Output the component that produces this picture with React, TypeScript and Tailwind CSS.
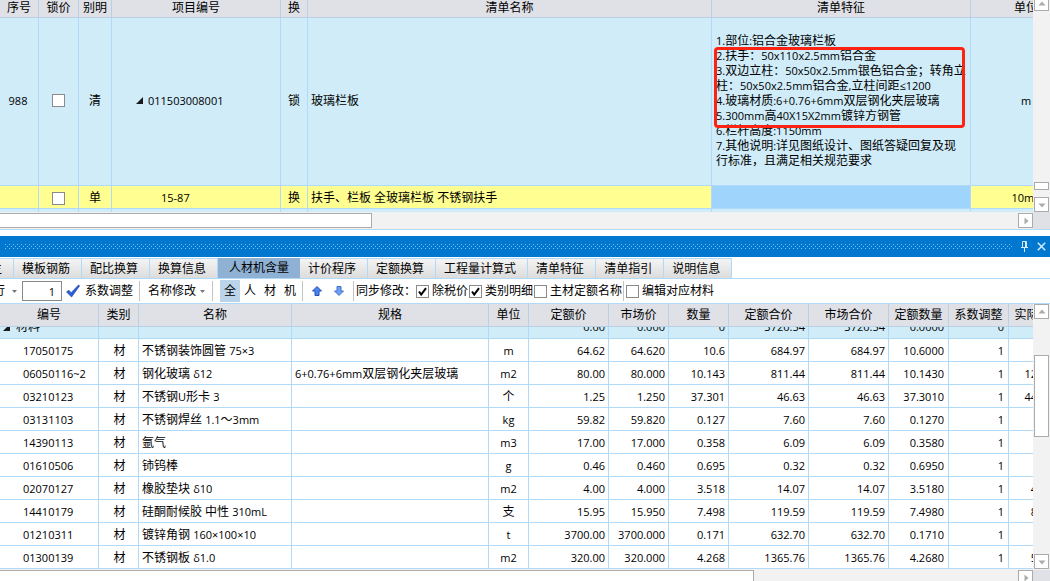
import { Fragment, type ReactNode } from 'react';

const BILL_COLUMNS = [
  { label: '序号', width: 'w-[39px]' },
  { label: '锁价', width: 'w-[40px]' },
  { label: '别明', width: 'w-[33px]' },
  { label: '项目编号', width: 'w-[169px]' },
  { label: '换', width: 'w-[27px]' },
  { label: '清单名称', width: 'w-[404px]' },
  { label: '清单特征', width: 'w-[259px]' },
  { label: '单位', width: 'w-[111px]' },
];

const FEATURES = [
  '1.部位:铝合金玻璃栏板',
  '2.扶手：50x110x2.5mm铝合金',
  '3.双边立柱：50x50x2.5mm银色铝合金；转角立',
  '柱：50x50x2.5mm铝合金,立柱间距≤1200',
  '4.玻璃材质:6+0.76+6mm双层钢化夹层玻璃',
  '5.300mm高40X15X2mm镀锌方钢管',
  '6.栏杆高度:1150mm',
  '7.其他说明:详见图纸设计、图纸答疑回复及现',
  '行标准，且满足相关规范要求',
];

const TABS = [
  '模板钢筋',
  '配比换算',
  '换算信息',
  '人材机含量',
  '计价程序',
  '定额换算',
  '工程量计算式',
  '清单特征',
  '清单指引',
  '说明信息',
];

const MATERIAL_COLUMNS = [
  { label: '编号', width: 'w-[99px]', cell: 'pl-[23px]' },
  { label: '类别', width: 'w-[40px]', cell: 'pl-0.5 text-center' },
  { label: '名称', width: 'w-[153px]', cell: 'pl-[3px]' },
  { label: '规格', width: 'w-[197px]', cell: 'pl-[3px]' },
  { label: '单位', width: 'w-[40px]', cell: 'text-center' },
  { label: '定额价', width: 'w-[80px]', cell: 'pr-[3px] text-right' },
  { label: '市场价', width: 'w-[60px]', cell: 'pr-[3px] text-right' },
  { label: '数量', width: 'w-[60px]', cell: 'pr-[3px] text-right' },
  { label: '定额合价', width: 'w-[80px]', cell: 'pr-[3px] text-right' },
  { label: '市场合价', width: 'w-[80px]', cell: 'pr-[3px] text-right' },
  { label: '定额数量', width: 'w-[60px]', cell: 'pr-1 text-right' },
  { label: '系数调整', width: 'w-[60px]', cell: 'pr-1 text-right' },
  { label: '实际数量', width: 'w-[60px]', cell: 'pr-7 text-right' },
];

const TOTAL_ROW = ['材料', '', '', '', '', '0.00', '0.000', '0', '3720.54', '3720.54', '0.0000', '0', ''];

const MATERIALS = [
  ['17050175', '材', '不锈钢装饰圆管 75×3', '', 'm', '64.62', '64.620', '10.6', '684.97', '684.97', '10.6000', '1', ''],
  ['06050116~2', '材', '钢化玻璃 δ12', '6+0.76+6mm双层钢化夹层玻璃', 'm2', '80.00', '80.000', '10.143', '811.44', '811.44', '10.1430', '1', '12.'],
  ['03210123', '材', '不锈钢U形卡 3', '', '个', '1.25', '1.250', '37.301', '46.63', '46.63', '37.3010', '1', '44.'],
  ['03131103', '材', '不锈钢焊丝 1.1～3mm', '', 'kg', '59.82', '59.820', '0.127', '7.60', '7.60', '0.1270', '1', ''],
  ['14390113', '材', '氩气', '', 'm3', '17.00', '17.000', '0.358', '6.09', '6.09', '0.3580', '1', ''],
  ['01610506', '材', '铈钨棒', '', 'g', '0.46', '0.460', '0.695', '0.32', '0.32', '0.6950', '1', ''],
  ['02070127', '材', '橡胶垫块 δ10', '', 'm2', '4.00', '4.000', '3.518', '14.07', '14.07', '3.5180', '1', '4.'],
  ['14410179', '材', '硅酮耐候胶 中性 310mL', '', '支', '15.95', '15.950', '7.498', '119.59', '119.59', '7.4980', '1', '8.'],
  ['01210311', '材', '镀锌角钢 160×100×10', '', 't', '3700.00', '3700.000', '0.171', '632.70', '632.70', '0.1710', '1', ''],
  ['01300139', '材', '不锈钢板 δ1.0', '', 'm2', '320.00', '320.000', '4.268', '1365.76', '1365.76', '4.2680', '1', '5.'],
];

/* Latin runs are set one size below the Chinese text around them */
function Mixed({ text }: { text: string }) {
  return (
    <>
      {text.split(/([!-~×δ≤]+)/).map((run, i) =>
        i % 2 === 1 ? (
          <span key={i} className="text-[11px]">
            {run}
          </span>
        ) : (
          <Fragment key={i}>{run}</Fragment>
        ),
      )}
    </>
  );
}

function CollapseMark() {
  return (
    <svg width="7" height="7" viewBox="0 0 7 7" className="shrink-0">
      <path d="M7 0v7H0z" fill="#1a1a1a" />
    </svg>
  );
}

const ARROWS = {
  up: 'M4 1.5 7.5 5.5h-7z',
  down: 'M.5 2.5h7L4 6.5z',
  right: 'M2.5 .5 6.5 4l-4 3.5z',
};

function ScrollButton({ dir, label }: { dir: keyof typeof ARROWS; label: string }) {
  return (
    <button
      aria-label={label}
      className="flex size-[15px] shrink-0 items-center justify-center border border-[#ababab] bg-white"
    >
      <svg width="8" height="8" viewBox="0 0 8 8">
        <path d={ARROWS[dir]} fill="#ababab" />
      </svg>
    </button>
  );
}

function Separator() {
  return <span className="h-5 w-px shrink-0 bg-[#c3c3c3]" />;
}

function CheckBox({ label, checked = false }: { label: string; checked?: boolean }) {
  return (
    <label className="flex shrink-0 items-center gap-[3px]">
      <span className="relative size-[13px]">
        <input
          type="checkbox"
          defaultChecked={checked}
          className="peer block size-[13px] appearance-none border border-[#8a8a8a] bg-white"
        />
        <svg
          viewBox="0 0 13 13"
          className="pointer-events-none absolute inset-0 hidden size-[13px] peer-checked:block"
        >
          <path d="M3 6.5 5.2 9.5 10 3.2" fill="none" stroke="#000" strokeWidth="2" />
        </svg>
      </span>
      <span>{label}</span>
    </label>
  );
}

function Th({ children }: { children: ReactNode }) {
  return (
    <th className="overflow-hidden border-r border-b border-[#b9cfe4] p-0 text-center font-normal whitespace-nowrap">
      {children}
    </th>
  );
}

function LockBox({ label }: { label: string }) {
  return (
    <input
      type="checkbox"
      aria-label={label}
      className="mx-auto block size-[13px] appearance-none border border-[#8a8a8a] bg-white"
    />
  );
}

function BillTable() {
  const itemCell = 'border-r border-b border-[#b0daf7] pb-0.5';
  const quotaCell = 'border-r border-b border-[#b0daf7] pt-0.5';
  return (
    <table className="w-[1082px] table-fixed border-separate border-spacing-0">
      <colgroup>
        {BILL_COLUMNS.map((c) => (
          <col key={c.label} className={c.width} />
        ))}
      </colgroup>
      <thead>
        <tr className="h-[18px] bg-[#dfe1e7] leading-[14px]">
          {BILL_COLUMNS.map((c) => (
            <th
              key={c.label}
              className="border-r border-b border-[#b9cfe4] px-0 pt-0 pb-0.5 text-center font-normal whitespace-nowrap"
            >
              {c.label}
            </th>
          ))}
        </tr>
      </thead>
      <tbody>
        <tr className="h-[168px] bg-[#cfecf8]">
          <td className={`${itemCell} pr-0.5 text-center text-[11px]`}>988</td>
          <td className={itemCell}>
            <LockBox label="锁价 988" />
          </td>
          <td className={`${itemCell} text-center`}>清</td>
          <td className={itemCell}>
            <div className="flex items-center gap-[5px] pl-6 text-[11px]">
              <CollapseMark />
              011503008001
            </div>
          </td>
          <td className={`${itemCell} text-center`}>锁</td>
          <td className={`${itemCell} pl-[3px]`}>玻璃栏板</td>
          <td className={`${itemCell} relative pl-1`}>
            <div className="leading-[15px] whitespace-pre">
              {FEATURES.map((line) => (
                <p key={line} className="h-[15px]">
                  <Mixed text={line} />
                </p>
              ))}
            </div>
            <div className="absolute top-[29px] right-[5px] left-[2px] h-[81px] rounded-sm border-3 border-[#fc2313]" />
          </td>
          <td className={`${itemCell} text-center text-[11px]`}>m</td>
        </tr>
        <tr className="h-[23px] bg-[#ffff91]">
          <td className={quotaCell} />
          <td className={quotaCell}>
            <LockBox label="锁价 15-87" />
          </td>
          <td className={`${quotaCell} text-center`}>单</td>
          <td className={`${quotaCell} pl-[49px] text-[11px]`}>15-87</td>
          <td className={`${quotaCell} text-center`}>换</td>
          <td className={`${quotaCell} pl-[3px]`}>扶手、栏板 全玻璃栏板 不锈钢扶手</td>
          <td className={`${quotaCell} bg-[#9fd5fd]`} />
          <td className={`${quotaCell} text-center text-[11px]`}>10m2</td>
        </tr>
        <tr className="h-[3px] bg-[#cfecf8]">
          {BILL_COLUMNS.map((c) => (
            <td key={c.label} className="border-r border-[#b0daf7] p-0" />
          ))}
        </tr>
      </tbody>
    </table>
  );
}

function MaterialTable() {
  return (
    <table className="w-[1069px] table-fixed border-separate border-spacing-0">
      <colgroup>
        {MATERIAL_COLUMNS.map((c) => (
          <col key={c.label} className={c.width} />
        ))}
      </colgroup>
      <thead>
        <tr className="h-[23px] bg-[#dfe1e7]">
          {MATERIAL_COLUMNS.map((c) => (
            <Th key={c.label}>{c.label}</Th>
          ))}
        </tr>
      </thead>
      <tbody>
        {/* group row, scrolled half under the header */}
        <tr className="bg-[#cfecf8]">
          {TOTAL_ROW.map((value, i) => (
            <td key={i} className="border-r border-b border-[#b0daf7] p-0">
              <div className="flex h-[11px] flex-col justify-end overflow-hidden">
                {i === 0 ? (
                  <div className="flex h-[22px] shrink-0 items-center gap-1.5 pl-[3px]">
                    <CollapseMark />
                    {value}
                  </div>
                ) : (
                  <div className={`h-[22px] shrink-0 text-[11px] leading-[22px] ${MATERIAL_COLUMNS[i].cell}`}>
                    {value}
                  </div>
                )}
              </div>
            </td>
          ))}
        </tr>
        {MATERIALS.map((row) => (
          <tr key={row[0]} className="h-[23px] bg-white">
            {row.map((value, i) => (
              <td
                key={i}
                className={`overflow-hidden border-r border-b border-[#b0daf7] pt-0.5 pb-0 whitespace-nowrap ${MATERIAL_COLUMNS[i].cell}`}
              >
                <Mixed text={value} />
              </td>
            ))}
          </tr>
        ))}
      </tbody>
    </table>
  );
}

export default function App() {
  return (
    <div className="flex h-screen flex-col overflow-hidden bg-white font-['Open_Sans','Noto_Sans_CJK_SC',sans-serif] text-xs leading-4 text-black">
      {/* Bill list */}
      <section className="shrink-0 border-b border-[#b0daf7]">
        <div className="flex">
          <div className="h-[212px] min-w-0 flex-1 overflow-hidden">
            <BillTable />
          </div>
          <div className="flex h-[212px] w-[17px] flex-col justify-end bg-[#f2f2f2] pl-px">
            <div className="-mt-1 mb-auto">
              <ScrollButton dir="up" label="向上滚动" />
            </div>
            <div className="mb-[7px] h-2 w-[15px] shrink-0 border border-[#ababab] bg-white" />
            <ScrollButton dir="down" label="向下滚动" />
          </div>
        </div>
        <div className="flex h-[17px] bg-[#f2f2f2]">
          <div className="flex min-w-0 flex-1 items-center justify-between">
            <div className="h-[15px] w-[36%] border border-l-0 border-[#ababab] bg-white" />
            <ScrollButton dir="right" label="向右滚动" />
          </div>
          <div className="w-[17px] bg-[#dfe1e7]" />
        </div>
      </section>

      {/* Docked panel title */}
      <div className="mt-1.5 flex h-[21px] shrink-0 items-center bg-[#0078d0] pl-[5px]">
        <svg className="h-[5px] min-w-0 flex-1" aria-hidden="true">
          <defs>
            <pattern id="grip" width="4" height="4" patternUnits="userSpaceOnUse">
              <path d="M0 0h1v1H0zM2 2h1v1H2z" fill="#7fc0f0" />
            </pattern>
          </defs>
          <rect width="100%" height="5" fill="url(#grip)" />
        </svg>
        <button aria-label="固定" className="ml-[7px]">
          <svg width="9" height="11" viewBox="0 0 9 11" fill="none" stroke="#d5ebfa">
            <path d="M2.5 6V.5h4V6M1 6.5h7M4.5 7v4M5.5 1v5" />
          </svg>
        </button>
        <button aria-label="关闭" className="mr-1 ml-2">
          <svg width="9" height="9" viewBox="0 0 9 9" fill="none" stroke="#d5ebfa" strokeWidth="1.5">
            <path d="M.8.8l7.4 7.4M8.2.8.8 8.2" />
          </svg>
        </button>
      </div>

      {/* Tabs */}
      <nav className="mt-px flex h-[21px] shrink-0 border-b border-[#b0daf7]">
        <button className="flex w-[14px] shrink-0 justify-end overflow-hidden border-t border-r border-[#b0daf7] bg-linear-to-b from-[#f4f4f4] to-[#dcdcdc] pr-[11px] leading-5">
          主
        </button>
        {TABS.map((tab) =>
          tab === '人材机含量' ? (
            <button key={tab} className="shrink-0 bg-[#8fb1d3] px-[11px]">
              {tab}
            </button>
          ) : (
            <button
              key={tab}
              className="shrink-0 border-t border-r border-[#b0daf7] bg-linear-to-b from-[#f4f4f4] to-[#dcdcdc] pr-[11px] pl-2 leading-5"
            >
              {tab}
            </button>
          ),
        )}
      </nav>

      {/* Toolbar */}
      <div className="flex h-6 shrink-0 items-center overflow-hidden whitespace-nowrap">
        <button className="flex w-[22px] shrink-0 items-center justify-end gap-[7px] pr-[5px]">
          <span>行</span>
          <svg width="5" height="3" viewBox="0 0 5 3" className="shrink-0">
            <path d="M0 0h5L2.5 3z" fill="#777" />
          </svg>
        </button>
        <input
          aria-label="系数"
          defaultValue="1"
          className="h-5 w-10 shrink-0 border border-[#8a8a8a] bg-white pr-1.5 text-right text-[11px]"
        />
        <button className="ml-1 flex shrink-0 items-center gap-[5px] pr-[6px]">
          <svg width="14" height="14" viewBox="0 0 14 14">
            <path d="M.5 8 3 6.2l2 2.6L12.5 1l1.2.8L5.6 13z" fill="#2a5fd8" stroke="#1b3f9e" strokeWidth=".6" />
          </svg>
          系数调整
        </button>
        <Separator />
        <button className="flex shrink-0 items-center gap-1 pr-[7px] pl-2">
          名称修改
          <svg width="5" height="3" viewBox="0 0 5 3">
            <path d="M0 0h5L2.5 3z" fill="#777" />
          </svg>
        </button>
        <Separator />
        <div className="ml-[7px] flex shrink-0 pr-0.5">
          <button className="h-[22px] w-5 bg-[#bcd4ea]">全</button>
          <button className="w-5">人</button>
          <button className="w-5">材</button>
          <button className="w-5">机</button>
        </div>
        <Separator />
        <div className="flex shrink-0 gap-3 px-[9px]">
          <button aria-label="上移">
            <svg width="10" height="10" viewBox="0 0 10 10">
              <path d="M5 .5 9.5 5H7v4.5H3V5H.5z" fill="#4b83ee" stroke="#2350b8" />
            </svg>
          </button>
          <button aria-label="下移">
            <svg width="10" height="10" viewBox="0 0 10 10">
              <path d="M5 9.5.5 5H3V.5h4V5h2.5z" fill="#6f9ff5" stroke="#4470cc" />
            </svg>
          </button>
        </div>
        <Separator />
        <span className="ml-0.5 shrink-0">同步修改：</span>
        <div className="flex shrink-0 gap-px pr-px">
          <CheckBox label="除税价" checked />
          <CheckBox label="类别明细" checked />
          <CheckBox label="主材定额名称" />
        </div>
        <Separator />
        <div className="ml-0.5 shrink-0">
          <CheckBox label="编辑对应材料" />
        </div>
      </div>

      {/* Materials */}
      <section className="flex min-h-0 flex-1 flex-col border-t border-[#b0daf7]">
        <div className="flex shrink-0">
          <div className="min-w-0 flex-1 overflow-hidden">
            <MaterialTable />
          </div>
          <div className="flex w-[17px] flex-col bg-[#f2f2f2] pl-px">
            <ScrollButton dir="up" label="向上滚动" />
            <div className="mt-9 h-[82px] w-[15px] border border-[#ababab] bg-white" />
            <div className="mt-auto">
              <ScrollButton dir="down" label="向下滚动" />
            </div>
          </div>
        </div>
        <div className="flex h-[17px] shrink-0 bg-[#f2f2f2] pt-px">
          <div className="flex min-w-0 flex-1 justify-between">
            <div className="h-[15px] w-[73%] border border-l-0 border-[#ababab] bg-white" />
            <ScrollButton dir="right" label="向右滚动" />
          </div>
          <div className="w-[17px] bg-[#dfe1e7]" />
        </div>
      </section>
    </div>
  );
}
